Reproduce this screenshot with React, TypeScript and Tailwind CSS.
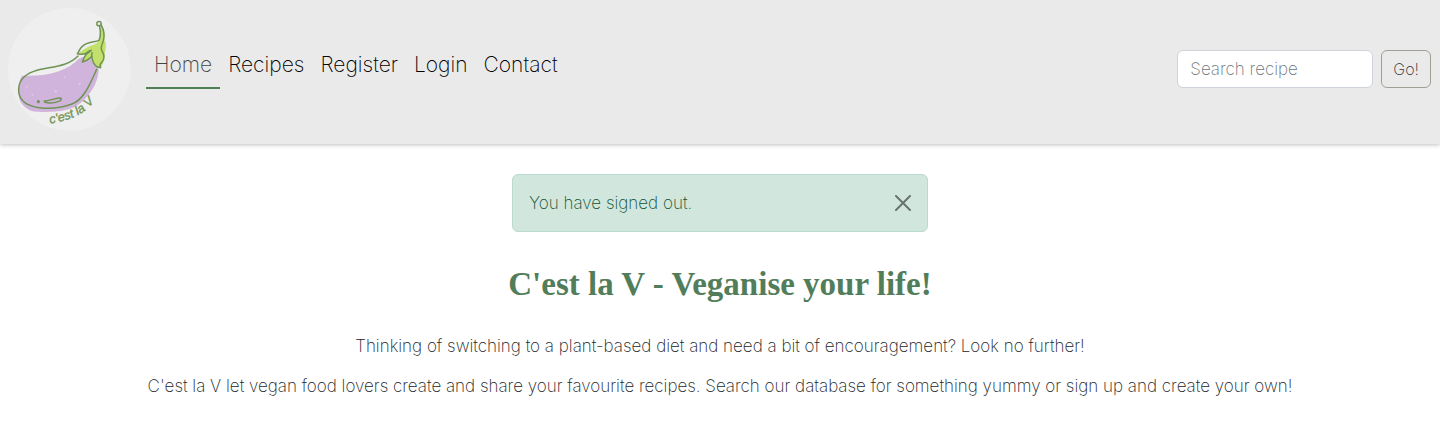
import { useState } from "react";

const links = ["Home", "Recipes", "Register", "Login", "Contact"];

function Logo() {
  return (
    <svg viewBox="24 24 369 369" className="size-[123px]" role="img" aria-label="c'est la V">
      <circle cx="208" cy="208" r="184" fill="#efefef" />
      <path
        d="M236 176C205 210 150 230 66 227C52 250 52 285 62 306C74 325 92 336 112 335C150 337 190 336 222 322C262 300 296 252 296 206L268 162Z"
        fill="#d0b4dc"
      />
      <path
        d="M302 70C311 84 316 104 313 122C317 124 319 130 317 144C316 156 311 166 313 178C312 190 305 198 300 203C286 200 276 190 275 173C268 178 258 184 247 186C250 178 253 171 258 163C250 165 240 165 233 161C246 151 262 140 280 134C292 130 299 123 301 113Z"
        fill="#c3e06c"
      />
      <g fill="none" stroke="#6f9455" strokeWidth="4.5" strokeLinecap="round" strokeLinejoin="round">
        <path d="M234 168C200 204 142 199 101 214C67 226 55 248 56 273C58 302 80 318 118 323C148 327 188 322 214 313C252 299 270 252 290 208" />
        <path d="M299 80C302 96 302 111 297 121C285 128 267 122 247 139C239 146 237 154 232 161C241 163 254 166 262 157C266 152 270 153 274 151C267 159 260 160 256 167C252 174 249 180 247 186C258 184 267 177 275 170" />
        <path d="M304 76C312 90 314 106 310 122C306 135 300 143 306 153C314 164 314 178 305 187C299 193 299 198 302 203C288 202 280 192 277 178C275 170 274 164 276 158" />
        <circle cx="297" cy="71" r="6.5" />
        <path d="M133 303C147 304 164 293 181 294C187 296 183 301 176 304C163 309 148 310 135 307Z" />
        <circle cx="115" cy="305" r="2.5" fill="#6f9455" />
      </g>
      <g fill="#e4cdec">
        <circle cx="80" cy="260" r="2.5" />
        <circle cx="97" cy="284" r="2.5" />
        <circle cx="167" cy="274" r="3.5" />
        <circle cx="193" cy="232" r="2.5" />
        <circle cx="239" cy="251" r="3" />
      </g>
      <path id="motto" d="M150 371C226 358 282 336 318 240" fill="none" />
      <text
        className="font-['Liberation_Sans',sans-serif] text-[38px] italic"
        fill="#6f9455"
        stroke="#6f9455"
        strokeWidth="1"
      >
        <textPath href="#motto">c'est la V</textPath>
      </text>
    </svg>
  );
}

export default function App() {
  const [alertOpen, setAlertOpen] = useState(true);

  return (
    <div className="bg-white font-['Inter',sans-serif] text-[17px] font-extralight text-[#212529]">
      <header className="flex flex-wrap items-center gap-[15px] bg-[#eaeaea] pt-2 pr-[9px] pb-[13px] pl-2 shadow-[0_1px_4px_rgba(0,0,0,0.25)]">
        <a href="#home">
          <Logo />
        </a>
        <nav className="flex grow flex-wrap pb-2 text-[21px]">
          {links.map((link, index) => (
            <a
              key={link}
              href={`#${link.toLowerCase()}`}
              className={
                index === 0
                  ? "border-b-2 border-[#4f7f57] px-2 py-2 leading-7 text-[#444]"
                  : "border-b-2 border-transparent px-2 py-2 leading-7 text-black"
              }
            >
              {link}
            </a>
          ))}
        </nav>
        <form className="flex gap-2 pb-0.5" role="search" onSubmit={(event) => event.preventDefault()}>
          <input
            type="search"
            aria-label="Search recipe"
            placeholder="Search recipe"
            className="h-[38px] w-49 rounded-md border border-[#ced4da] bg-white px-3 placeholder:text-[#6c757d]"
          />
          <button className="h-[38px] rounded-md border border-[#a0a096] px-[11px] text-base text-[#333]">Go!</button>
        </form>
      </header>
      <main className="flex flex-col items-center px-3 pt-[30px] pb-7 text-center">
        {alertOpen && (
          <div
            role="alert"
            className="flex w-full max-w-[416px] items-center justify-between rounded-md border border-[#badbcc] bg-[#d1e7dd] px-4 py-4 leading-6 text-[#0f5132]"
          >
            <span>You have signed out.</span>
            <button aria-label="Close" onClick={() => setAlertOpen(false)}>
              <svg viewBox="0 0 16 16" className="size-4" fill="none" stroke="#68746f" strokeWidth="2" strokeLinecap="round">
                <path d="M1 1L15 15M15 1L1 15" />
              </svg>
            </button>
          </div>
        )}
        <h1 className="mt-8 text-[33px] leading-10 font-bold text-[#527d5a] font-['Liberation_Serif',serif]">
          C'est la V - Veganise your life!
        </h1>
        <p className="mt-[30px] leading-6">
          Thinking of switching to a plant-based diet and need a bit of encouragement? Look no further!
        </p>
        <p className="mt-4 leading-6">
          C'est la V let vegan food lovers create and share your favourite recipes. Search our database for something
          yummy or sign up and create your own!
        </p>
      </main>
    </div>
  );
}
